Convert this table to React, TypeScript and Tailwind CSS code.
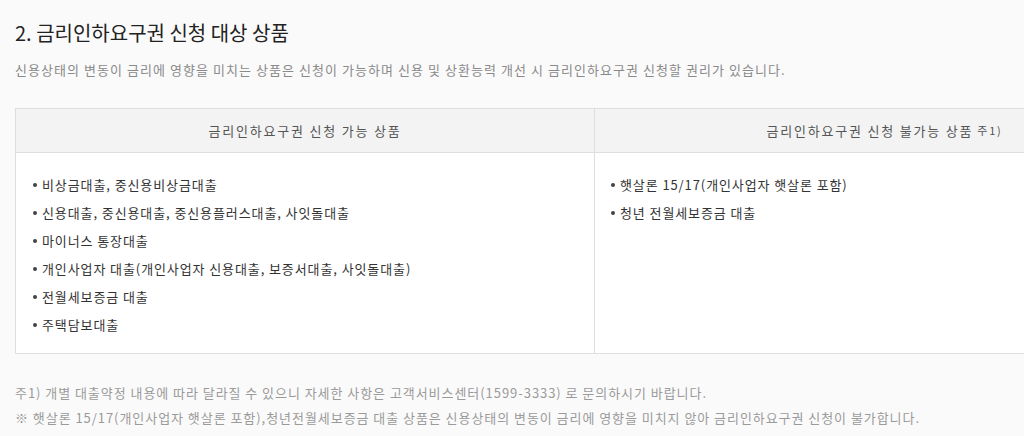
import React from "react";

const left = [
  "비상금대출, 중신용비상금대출",
  "신용대출, 중신용대출, 중신용플러스대출, 사잇돌대출",
  "마이너스 통장대출",
  "개인사업자 대출(개인사업자 신용대출, 보증서대출, 사잇돌대출)",
  "전월세보증금 대출",
  "주택담보대출",
];
const right = ["햇살론 15/17(개인사업자 햇살론 포함)", "청년 전월세보증금 대출"];

function Item({ text }: { text: string }) {
  return (
    <li className="flex items-center h-[28px] text-[13px] text-[#333] tracking-[0.9px]">
      <span className="w-[4px] h-[4px] rounded-full bg-[#444] mr-[5px]" />
      <span>{text}</span>
    </li>
  );
}

export default function App() {
  return (
    <div
      className="w-[1024px] h-[436px] overflow-hidden bg-[#fafafa]"
      style={{ fontFamily: '"Noto Sans CJK KR", "Noto Sans", sans-serif' }}
    >
      <div className="pl-[15px] pt-[18px]">
        <h2 className="text-[20px] leading-[30px] text-[#222] font-normal">2. 금리인하요구권 신청 대상 상품</h2>
        <p className="mt-[13px] text-[13px] leading-[18px] text-[#8a8a8a] tracking-[1.05px] whitespace-nowrap">
          신용상태의 변동이 금리에 영향을 미치는 상품은 신청이 가능하며 신용 및 상환능력 개선 시 금리인하요구권 신청할 권리가 있습니다.
        </p>
        <div className="mt-[29px] w-[1160px] flex border border-[#dedede] bg-white">
          <div className="w-[579px] border-r border-[#dedede] flex flex-col">
            <div className="h-[44px] bg-[#f3f3f3] border-b border-[#dedede] flex items-center justify-center text-[13px] text-[#555] tracking-[1.8px]">
              금리인하요구권 신청 가능 상품
            </div>
            <ul className="pl-[17px] pt-[18px] pb-[14px]">
              {left.map((t) => (
                <Item key={t} text={t} />
              ))}
            </ul>
          </div>
          <div className="flex-1 flex flex-col">
            <div className="h-[44px] bg-[#f3f3f3] border-b border-[#dedede] flex items-center justify-center text-[13px] text-[#555] tracking-[1.8px]">
              금리인하요구권 신청 불가능 상품 <span className="ml-[4px] text-[11px]">주1)</span>
            </div>
            <ul className="pl-[16px] pt-[18px]">
              {right.map((t) => (
                <Item key={t} text={t} />
              ))}
            </ul>
          </div>
        </div>
        <div className="mt-[26px] text-[13px] leading-[25px] text-[#9a9a9a] tracking-[0.95px] whitespace-nowrap">
          <p>주1) 개별 대출약정 내용에 따라 달라질 수 있으니 자세한 사항은 고객서비스센터(1599-3333) 로 문의하시기 바랍니다.</p>
          <p>※ 햇살론 15/17(개인사업자 햇살론 포함),청년전월세보증금 대출 상품은 신용상태의 변동이 금리에 영향을 미치지 않아 금리인하요구권 신청이 불가합니다.</p>
        </div>
      </div>
    </div>
  );
}
